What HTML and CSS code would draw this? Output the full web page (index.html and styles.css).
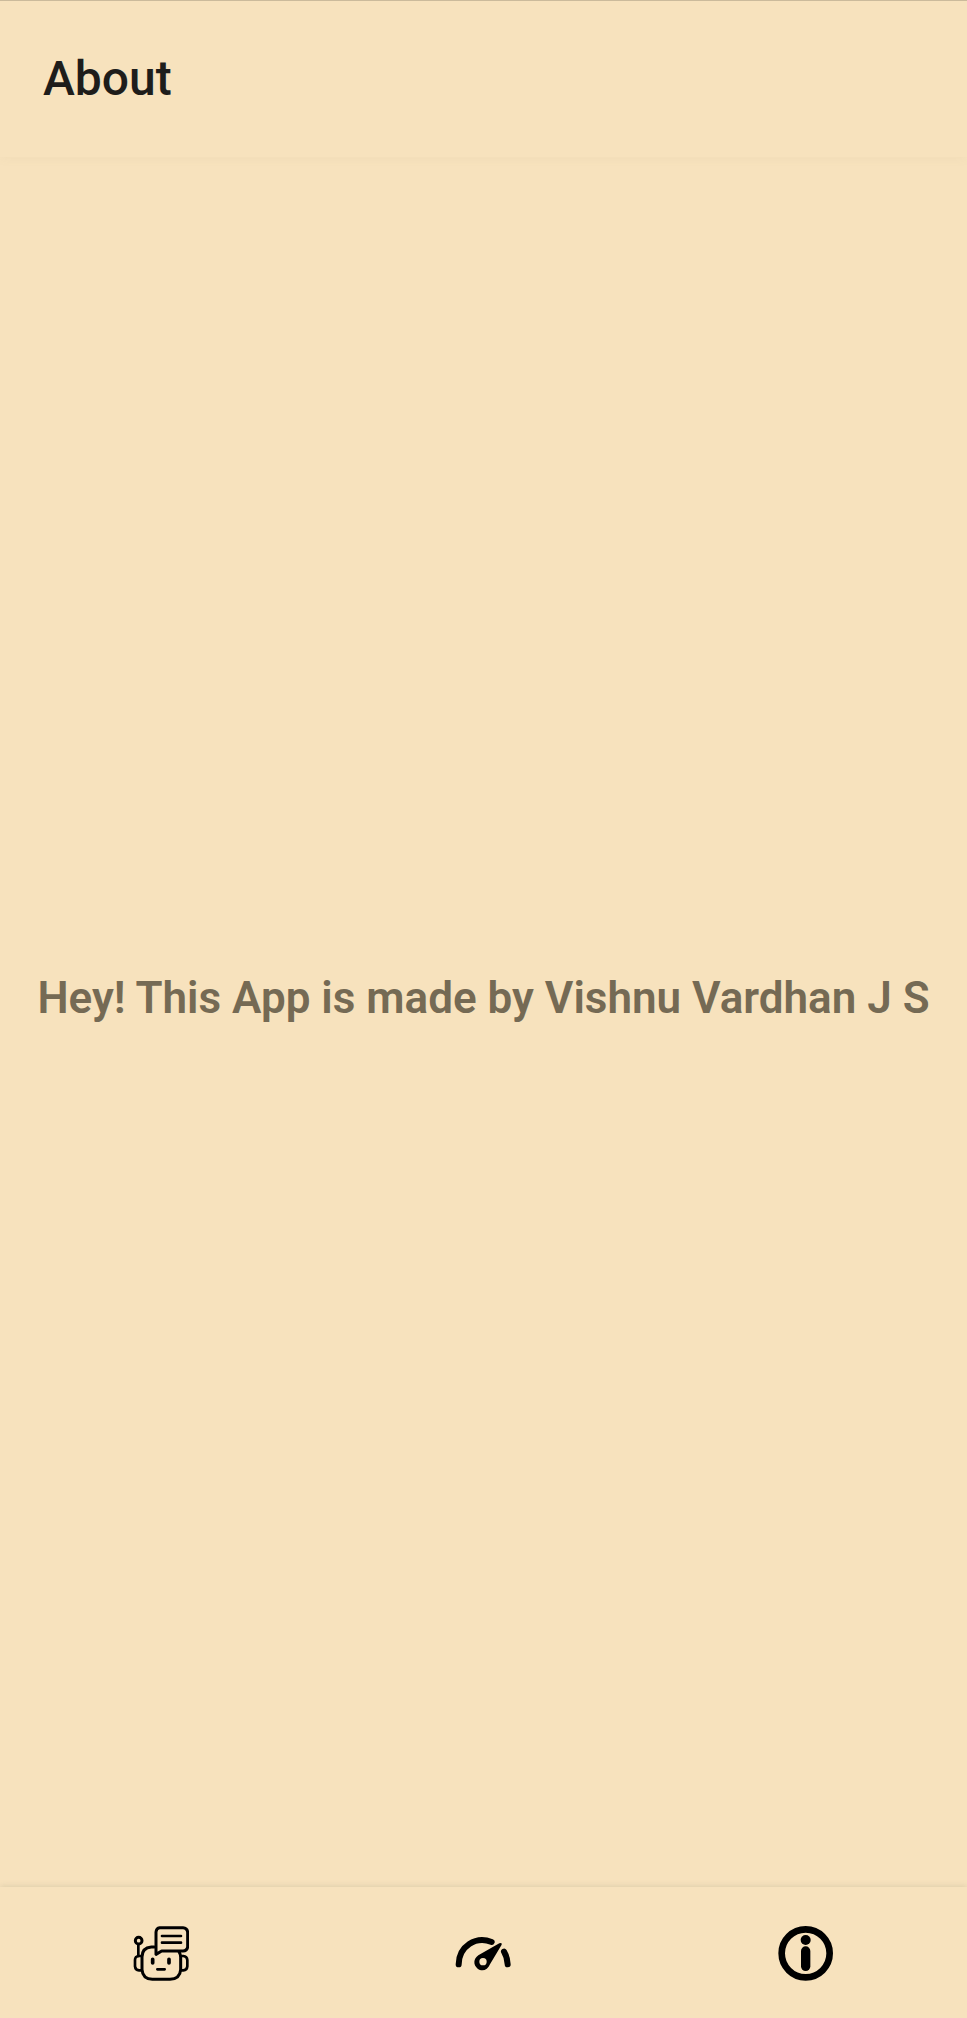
FILE: index.html
```html
<!DOCTYPE html>
<html lang="en">
<head>
<meta charset="utf-8">
<meta name="viewport" content="width=device-width, initial-scale=1">
<title>About</title>
<link rel="stylesheet" href="styles.css">
</head>
<body>
<header class="app-bar"><h1 class="title">About</h1></header>
<main class="content"><p class="message">Hey! This App is made by Vishnu Vardhan J S</p></main>
<nav class="bottom-nav" aria-label="Main">
  <a class="nav-item" href="#chat" aria-label="Chat bot">
    <svg class="icon" viewBox="40 44 168 168" fill="none" stroke="#000" stroke-width="9" stroke-linecap="round" stroke-linejoin="round">
      <path d="M104 110H95Q67 112 67 140V178Q69 206 98 207H151Q181 206 183 178V140Q182 130 178 124"/>
      <path d="M66 137H58Q46 138 46 149V168Q47 179 58 180H66M184 137H191Q202 138 203 149V168Q202 179 191 180H184" stroke-width="8"/>
      <path d="M56 137V103" stroke-width="8"/>
      <circle cx="57" cy="91" r="10"/>
      <path d="M120 52H190Q203 53 204 66V109Q203 121 190 122H126L109 132V65Q110 53 120 52Z"/>
      <path d="M127 77H184M127 97H184M113 177H135" stroke-width="8"/>
      <path d="M99 147V158M148 147V158" stroke-width="11"/>
    </svg>
  </a>
  <a class="nav-item" href="#dashboard" aria-label="Dashboard">
    <svg class="icon" viewBox="46 44 168 168" fill="none" stroke="#000" stroke-width="18" stroke-linecap="round">
      <path d="M57 162C58 108 108 76 156 95M193 124Q203 140 204 162"/>
      <path d="M184 98Q187 99 186 103L151 162C144 180 127 185 114 175C100 164 101 145 116 135L179 99Z" fill="#000" stroke="none"/>
      <circle cx="130" cy="154" r="11" fill="#f7e2bd" stroke="none"/>
    </svg>
  </a>
  <a class="nav-item" href="#about" aria-label="About" aria-current="page">
    <svg class="icon" viewBox="42 44 168 168" fill="none" stroke="#000">
      <circle cx="125" cy="129" r="72" stroke-width="20"/>
      <circle cx="125" cy="89" r="15" fill="#000" stroke="none"/>
      <path d="M125 122V168" stroke-width="28" stroke-linecap="round"/>
    </svg>
  </a>
</nav>
</body>
</html>
```
FILE: styles.css
```css
* { box-sizing: border-box; }

body {
  min-height: 100vh;
  margin: 0;
  display: flex;
  flex-direction: column;
  background: #f7e2bd;
  color: #1e1d1b;
  font-family: Roboto, sans-serif;
}

.app-bar {
  padding: 48px 43px;
  border-top: 1px solid #cbba9b;
  box-shadow: 0 2px 10px rgba(130, 140, 100, 0.05);
}

.title {
  margin: 0;
  font-size: 48px;
  font-weight: 500;
  line-height: 60px;
}

.content {
  flex: 1;
  display: flex;
  align-items: center;
  justify-content: center;
  padding: 0 16px 48px;
}

.message {
  margin: 0;
  color: #756a54;
  font-size: 44px;
  font-weight: 600;
  line-height: 52px;
  text-align: center;
}

.bottom-nav {
  display: flex;
  height: 131px;
  box-shadow: 0 -1px 6px rgba(110, 115, 90, 0.18);
}

.nav-item {
  flex: 1;
  display: flex;
  align-items: center;
  justify-content: center;
}

.icon {
  width: 56px;
  height: 56px;
}
```
